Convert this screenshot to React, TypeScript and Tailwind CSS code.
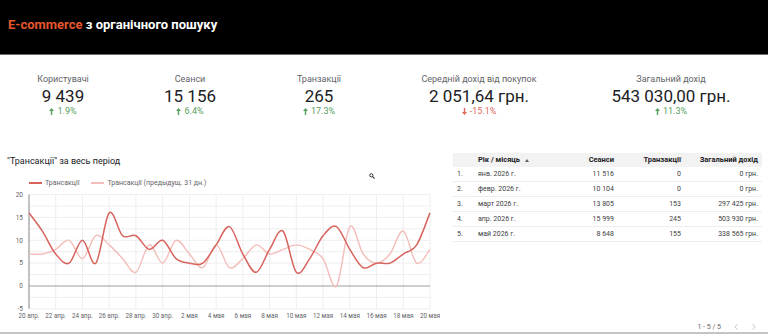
import { ChevronLeft, ChevronRight } from 'lucide-react';

interface Kpi {
    label: string;
    value: string;
    delta: string;
    up: boolean;
    width: string;
}

const kpis: Kpi[] = [
    { label: 'Користувачі', value: '9 439', delta: '1.9%', up: true, width: 'w-[126px]' },
    { label: 'Сеанси', value: '15 156', delta: '6.4%', up: true, width: 'w-[128px]' },
    { label: 'Транзакції', value: '265', delta: '17.3%', up: true, width: 'w-[130px]' },
    { label: 'Середній дохід від покупок', value: '2 051,64 грн.', delta: '-15.1%', up: false, width: 'w-[190px]' },
    { label: 'Загальний дохід', value: '543 030,00 грн.', delta: '11.3%', up: true, width: 'w-[194px]' },
];

const rows = [
    ['1.', 'янв. 2026 г.', '11 516', '0', '0 грн.'],
    ['2.', 'февр. 2026 г.', '10 104', '0', '0 грн.'],
    ['3.', 'март 2026 г.', '13 805', '153', '297 425 грн.'],
    ['4.', 'апр. 2026 г.', '15 999', '245', '503 930 грн.'],
    ['5.', 'май 2026 г.', '8 648', '155', '338 565 грн.'],
];

// daily values, 20 apr .. 20 may
const current = [16, 12, 7, 5, 10, 5, 16, 11, 11, 8, 10, 6, 5, 5, 9, 13, 7, 3, 8, 12, 3, 6, 11, 13, 8, 4, 5, 5, 7, 9, 16];
const previous = [7, 7, 8, 10, 6, 11, 9, 6, 3, 9, 5, 10, 7, 4, 9, 4, 6, 9, 7, 8, 9, 8, 6, 0, 13, 7, 5, 7, 12, 5, 8];

const X0 = 29;
const X1 = 430;
const stepX = (X1 - X0) / 30;
const yOf = (v: number) => 98 - v * 4.57;
const xOf = (i: number) => X0 + i * stepX;

const xLabels = ['20 апр.', '22 апр.', '24 апр.', '26 апр.', '28 апр.', '30 апр.', '2 мая', '4 мая', '6 мая', '8 мая', '10 мая', '12 мая', '14 мая', '16 мая', '18 мая', '20 мая'];

function smoothPath(values: number[]) {
    const pts = values.map((v, i) => [xOf(i), yOf(v)]);
    let d = `M${pts[0][0]},${pts[0][1]}`;
    for (let i = 0; i < pts.length - 1; i++) {
        const p0 = pts[i - 1] || pts[i];
        const p1 = pts[i];
        const p2 = pts[i + 1];
        const p3 = pts[i + 2] || p2;
        const c1x = p1[0] + (p2[0] - p0[0]) / 6;
        const c1y = p1[1] + (p2[1] - p0[1]) / 6;
        const c2x = p2[0] - (p3[0] - p1[0]) / 6;
        const c2y = p2[1] - (p3[1] - p1[1]) / 6;
        d += ` C${c1x},${c1y} ${c2x},${c2y} ${p2[0]},${p2[1]}`;
    }
    return d;
}

const Arrow = ({ up }: { up: boolean }) => (
    <svg width="5" height="7" viewBox="0 0 5 7" className={up ? '' : 'rotate-180'}>
        <path d="M2.5 0 L5 3 L3.2 3 L3.2 7 L1.8 7 L1.8 3 L0 3 Z" fill="currentColor" />
    </svg>
);

function Chart() {
    const hLines = [20, 17.5, 15, 12.5, 10, 7.5, 5, 2.5, -2.5, -5];
    return (
        <svg width="440" height="134" className="block">
            {hLines.map((v) => (
                <line key={v} x1={X0} x2={X1} y1={yOf(v)} y2={yOf(v)} stroke="#eeeeee" strokeWidth="1" />
            ))}
            {Array.from({ length: 16 }).map((_, i) => (
                <line key={i} x1={xOf(i * 2)} x2={xOf(i * 2)} y1={yOf(20)} y2={yOf(-5)} stroke="#eeeeee" strokeWidth="1" />
            ))}
            <line x1={X0} x2={X1} y1={yOf(0)} y2={yOf(0)} stroke="#9e9e9e" strokeWidth="1.2" />
            <line x1={X0} x2={X0} y1={yOf(20)} y2={yOf(-5)} stroke="#9e9e9e" strokeWidth="1.2" />
            {[20, 15, 10, 5, 0, -5].map((v) => (
                <text key={v} x={23} y={yOf(v) + 2.3} textAnchor="end" fontSize="6.5" fill="#5f6368">{v}</text>
            ))}
            {xLabels.map((l, i) => (
                <text key={l} x={xOf(i * 2)} y={130} textAnchor="middle" fontSize="6.3" fill="#5f6368">{l}</text>
            ))}
            <path d={smoothPath(previous)} fill="none" stroke="#f3bdb9" strokeWidth="1.4" />
            <path d={smoothPath(current)} fill="none" stroke="#d8635d" strokeWidth="1.5" />
        </svg>
    );
}

export default function App() {
    return (
        <div className="w-[768px] h-[334px] bg-white overflow-hidden font-['Roboto',sans-serif] relative">
            <div className="h-[55px] bg-black border-b border-[#6b6b6b] pl-2 pt-[17px]">
                <h1 className="text-[13px] leading-4 font-bold text-white">
                    <span className="text-[#e4572e]">E-commerce</span> з органічного пошуку
                </h1>
            </div>

            <div className="flex pt-[18px]">
                {kpis.map((k) => (
                    <div key={k.label} className={`${k.width} flex flex-col items-center`}>
                        <div className="text-[9px] leading-3 text-[#5f6368]">{k.label}</div>
                        <div className="mt-px text-[17px] leading-5 text-[#202124]">{k.value}</div>
                        <div className={`flex items-center gap-[3px] text-[9px] leading-[10px] ${k.up ? 'text-[#57a05b]' : 'text-[#e0675c]'}`}>
                            <Arrow up={k.up} />
                            <span>{k.delta}</span>
                        </div>
                    </div>
                ))}
            </div>

            <div className="flex h-[182px] mt-[34px]">
                <div className="w-[440px] relative">
                    <div className="mt-[5px] pl-[7px] text-[9px] leading-3 text-[#202124]">"Трансакції" за весь період</div>
                    <div className="mt-[11px] flex items-center h-[10px] pl-[29px] text-[7px] text-[#5f6368]">
                        <span className="w-[13px] h-[2px] bg-[#d8635d]" />
                        <span className="ml-[3px]">Трансакції</span>
                        <span className="ml-[12px] w-[13px] h-[2px] bg-[#f3bdb9]" />
                        <span className="ml-[3px]">Трансакції (предыдущ. 31 дн.)</span>
                    </div>
                    <Chart />
                    <svg width="6" height="6" viewBox="0 0 6 6" className="absolute left-[369px] top-[23px]">
                        <circle cx="2.3" cy="2.3" r="1.6" fill="none" stroke="#333" strokeWidth="1" />
                        <line x1="3.4" y1="3.4" x2="5.6" y2="5.6" stroke="#333" strokeWidth="1.1" />
                    </svg>
                </div>

                <div className="ml-[13px] w-[309px] flex flex-col">
                    <div className="mt-[3px] grid grid-cols-[25px_82px_58px_67px_77px] h-[14px] items-center bg-[#f2f2f2] text-[7.5px] font-bold text-[#202124]">
                        <span />
                        <span className="flex items-center gap-[5px]">Рік / місяць
                            <svg width="4" height="3" viewBox="0 0 4 3"><path d="M2 0 L4 3 L0 3 Z" fill="#5f6368" /></svg>
                        </span>
                        <span className="text-right pr-1">Сеанси</span>
                        <span className="text-right pr-1">Транзакції</span>
                        <span className="text-right pr-1">Загальний дохід</span>
                    </div>
                    {rows.map((r) => (
                        <div key={r[0]} className="grid grid-cols-[25px_82px_58px_67px_77px] h-[15px] items-center border-b border-[#eeeeee] text-[7px] text-[#3c4043]">
                            <span className="pl-[4px]">{r[0]}</span>
                            <span>{r[1]}</span>
                            <span className="text-right pr-1">{r[2]}</span>
                            <span className="text-right pr-1">{r[3]}</span>
                            <span className="text-right pr-1">{r[4]}</span>
                        </div>
                    ))}
                    <div className="mt-auto flex items-center justify-end h-[10px] text-[7px] text-[#5f6368] pr-[3px]">
                        <span>1 - 5 / 5</span>
                        <ChevronLeft size={10} strokeWidth={1.5} className="ml-[10px] text-[#9aa0a6]" />
                        <ChevronRight size={10} strokeWidth={1.5} className="ml-[8px] text-[#9aa0a6]" />
                    </div>
                </div>
            </div>
            <div className="h-[2px] bg-[#c4c4c4]" />
        </div>
    );
}
